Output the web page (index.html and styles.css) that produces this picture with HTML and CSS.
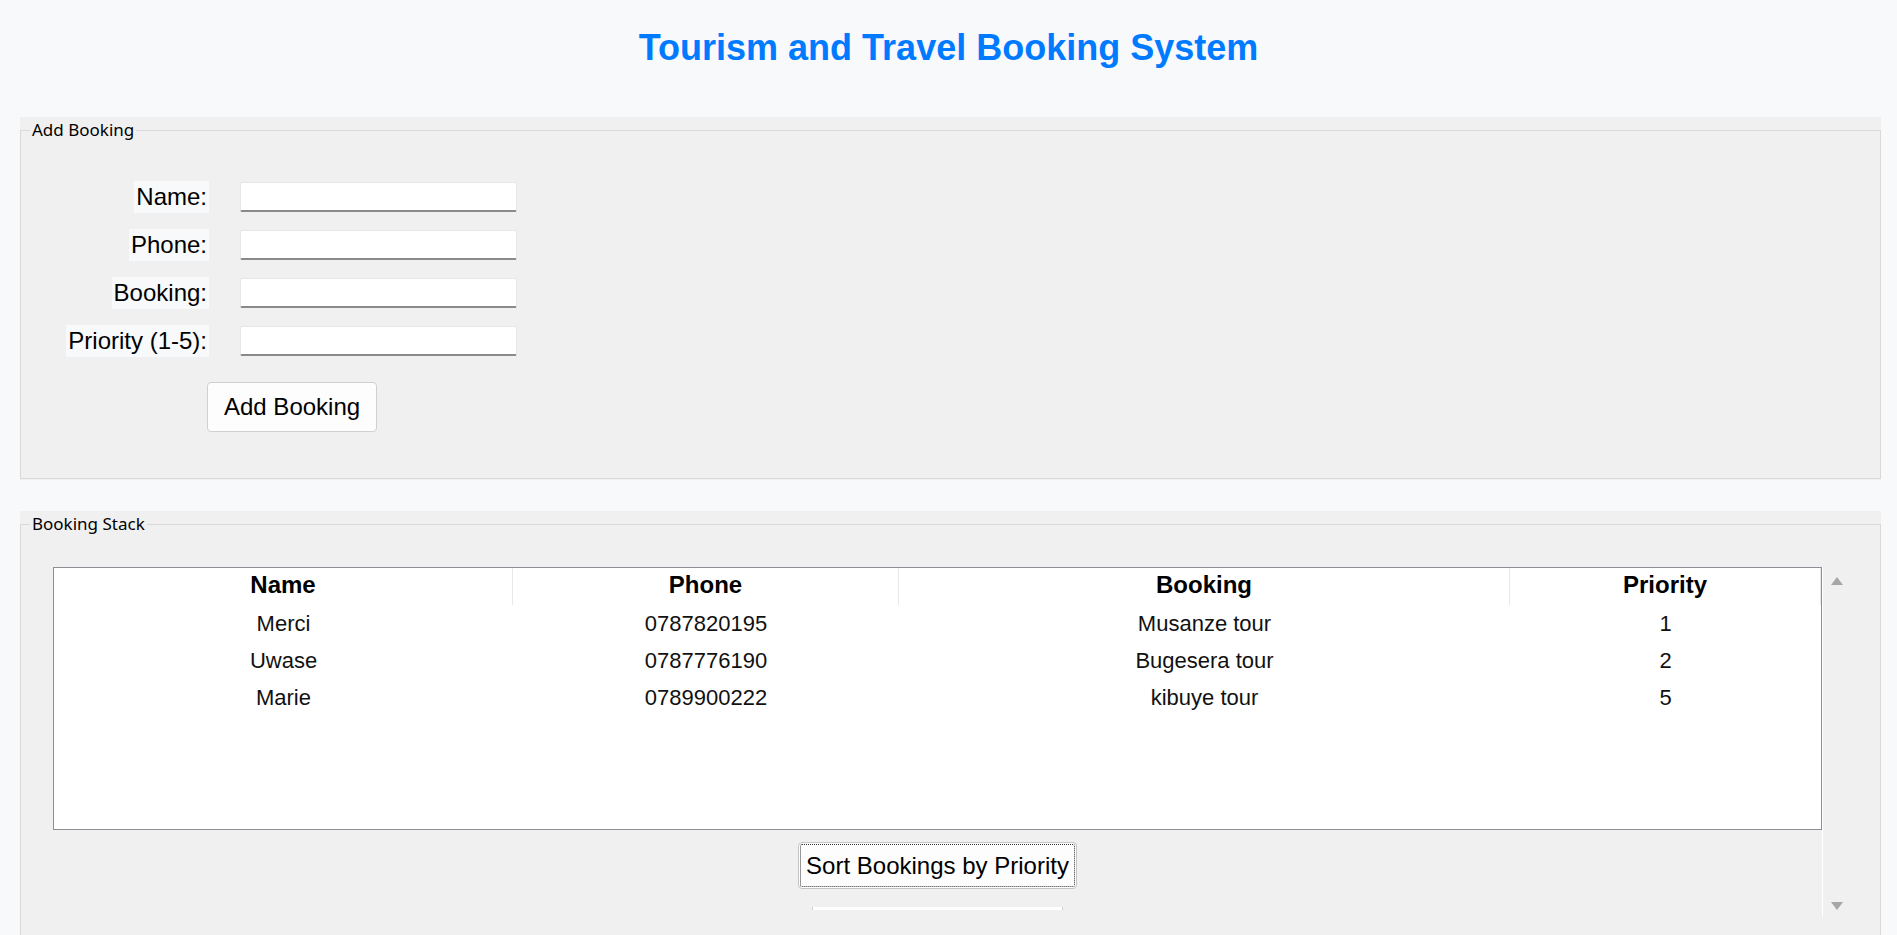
FILE: index.html
```html
<!DOCTYPE html>
<html lang="en">
<head>
<meta charset="utf-8">
<title>Tourism and Travel Booking System</title>
<link rel="stylesheet" href="styles.css">
</head>
<body>
<h1 class="title">Tourism and Travel Booking System</h1>

<section class="panel">
  <fieldset class="group group-add">
    <legend class="group-label">Add Booking</legend>
    <div class="form">
      <label class="field-label" for="f-name">Name:</label>
      <input class="entry" id="f-name" type="text">
      <label class="field-label" for="f-phone">Phone:</label>
      <input class="entry" id="f-phone" type="text">
      <label class="field-label" for="f-booking">Booking:</label>
      <input class="entry" id="f-booking" type="text">
      <label class="field-label" for="f-priority">Priority (1-5):</label>
      <input class="entry" id="f-priority" type="text">
    </div>
    <div class="form-actions">
      <button class="btn btn-add" type="button">Add Booking</button>
    </div>
  </fieldset>
</section>

<section class="panel panel-stack">
  <fieldset class="group group-stack">
    <legend class="group-label">Booking Stack</legend>
    <div class="stack-body">
      <div class="stack-main">
        <div class="tree">
          <div class="tree-row tree-head">
            <div class="th">Name</div>
            <div class="th">Phone</div>
            <div class="th">Booking</div>
            <div class="th">Priority</div>
          </div>
          <div class="tree-row">
            <div class="td">Merci</div>
            <div class="td">0787820195</div>
            <div class="td">Musanze tour</div>
            <div class="td">1</div>
          </div>
          <div class="tree-row">
            <div class="td">Uwase</div>
            <div class="td">0787776190</div>
            <div class="td">Bugesera tour</div>
            <div class="td">2</div>
          </div>
          <div class="tree-row">
            <div class="td">Marie</div>
            <div class="td">0789900222</div>
            <div class="td">kibuye tour</div>
            <div class="td">5</div>
          </div>
        </div>
        <button class="btn btn-sort" type="button">Sort Bookings by Priority</button>
        <div class="hbar"></div>
      </div>
      <div class="vscroll">
        <span class="arrow arrow-up"></span>
        <span class="arrow arrow-down"></span>
      </div>
    </div>
  </fieldset>
</section>
</body>
</html>
```

FILE: styles.css
```css
html, body {
  margin: 0;
  padding: 0;
  overflow: hidden;
}

body {
  background: #f8f9fa;
  font-family: "Liberation Sans", Arial, sans-serif;
  color: #000;
}

.title {
  margin: 0;
  padding-top: 27px;
  font-size: 36px;
  line-height: 41px;
  font-weight: bold;
  color: #007bff;
  text-align: center;
}

.panel {
  margin: 49px 16px 0 20px;
  background: #f0f0f0;
  padding-bottom: 1px;
}

.panel-stack {
  margin-top: 31px;
}

.group {
  margin: 0;
  min-width: 0;
  border: 1px solid #d9d9d9;
}

.group-add {
  padding: 38px 0 46px 0;
}

.group-stack {
  padding: 30px 0 60px 0;
}

.group-label {
  margin-left: 9px;
  padding: 0 2px;
  font-family: "Noto Sans", "Open Sans", sans-serif;
  font-size: 17px;
  line-height: 26px;
  color: #000;
}

/* form */
.form {
  display: grid;
  grid-template-columns: 188px 277px;
  column-gap: 31px;
  row-gap: 16px;
  align-items: center;
}

.field-label {
  justify-self: end;
  background: #f8f9fa;
  padding: 2px 2px;
  font-size: 24px;
  line-height: 28px;
}

.entry {
  box-sizing: border-box;
  width: 277px;
  height: 30px;
  margin: 0;
  padding: 0 4px;
  background: #fff;
  border: 1px solid #e6e6e6;
  border-bottom: 2px solid #8a8a8a;
  border-radius: 2px;
  font-family: "Liberation Sans", Arial, sans-serif;
  font-size: 22px;
  outline: none;
}

.form-actions {
  margin-top: 25px;
  padding-left: 186px;
}

.btn {
  margin: 0;
  font-family: "Liberation Sans", Arial, sans-serif;
  font-size: 24px;
  line-height: 28px;
  color: #000;
  background: #fdfdfd;
  border: 1px solid #d0d0d0;
  border-radius: 4px;
}

.btn-add {
  padding: 10px 16px;
}

.btn-sort {
  margin-top: 12px;
  padding: 8px 7px;
  line-height: 29px;
  border-color: #c4c4c4;
  outline: 1px dotted #333;
  outline-offset: -3px;
}

/* booking stack */
.stack-body {
  display: flex;
  align-items: flex-start;
  padding-left: 32px;
}

.stack-main {
  width: 1769px;
  display: flex;
  flex-direction: column;
  align-items: center;
}

.tree {
  box-sizing: border-box;
  width: 100%;
  height: 263px;
  background: #fff;
  border: 1px solid #8c9096;
}

.tree-row {
  display: grid;
  grid-template-columns: 459px 386px 611px 311px;
  height: 37px;
}

.th {
  box-sizing: border-box;
  border-right: 1px solid #e8e8e8;
  font-size: 24px;
  font-weight: bold;
  line-height: 33px;
  padding-bottom: 4px;
  text-align: center;
}

.td {
  font-size: 22px;
  line-height: 37px;
  text-align: center;
  color: #111;
}

.hbar {
  box-sizing: border-box;
  margin-top: 18px;
  width: 251px;
  height: 3px;
  background: #fff;
  border-left: 1px solid #cfcfcf;
  border-right: 1px solid #cfcfcf;
}

.vscroll {
  box-sizing: border-box;
  width: 28px;
  height: 350px;
  border-left: 1px solid #fff;
  padding: 10px 0 7px;
  display: flex;
  flex-direction: column;
  justify-content: space-between;
  align-items: center;
}

.arrow {
  width: 0;
  height: 0;
  border-left: 6px solid transparent;
  border-right: 6px solid transparent;
}

.arrow-up {
  border-bottom: 8px solid #a6a6a6;
}

.arrow-down {
  border-top: 8px solid #a6a6a6;
}
```
